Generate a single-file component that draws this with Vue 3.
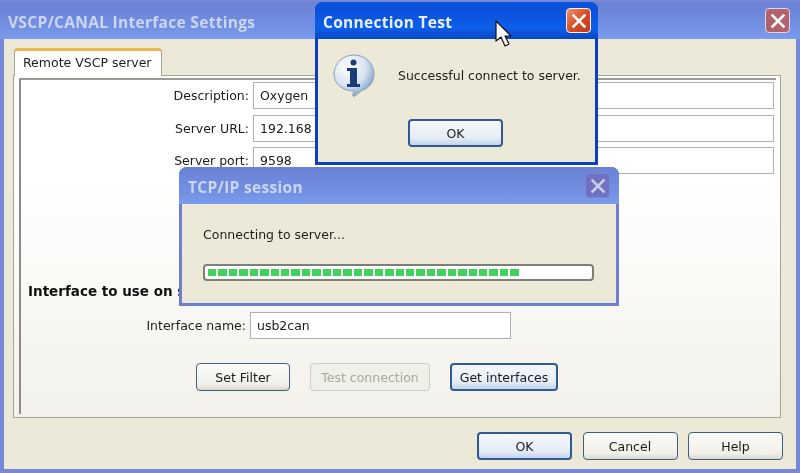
<script setup>
const fields = [
  { label: 'Description:', value: 'Oxygen' },
  { label: 'Server URL:', value: '192.168' },
  { label: 'Server port:', value: '9598' },
]
const segments = Array.from({ length: 30 })
</script>

<template>
  <div class="screen">
    <section class="window main">
      <header class="titlebar inactive">
        <span class="title">VSCP/CANAL Interface Settings</span>
        <span class="close faded-red">
          <svg viewBox="0 0 20 20" width="18" height="18"><path d="M4 4 16 16M16 4 4 16" stroke="#fff" stroke-width="3" stroke-linecap="square" /></svg>
        </span>
      </header>
      <div class="client">
        <div class="tabs"><span class="tab">Remote VSCP server</span></div>
        <div class="panel">
          <div class="inner">
            <div class="fields">
              <div v-for="f in fields" :key="f.label" class="field">
                <label>{{ f.label }}</label>
                <span class="input">{{ f.value }}</span>
              </div>
            </div>
            <h4 class="heading">Interface to use on server</h4>
            <div class="iface">
              <label>Interface name:</label>
              <span class="input short">usb2can</span>
            </div>
            <div class="actions">
              <button class="btn w94">Set Filter</button>
              <button class="btn w120 disabled">Test connection</button>
              <button class="btn w108 focus">Get interfaces</button>
            </div>
          </div>
        </div>
        <footer class="footer">
          <button class="btn w95 focus">OK</button>
          <button class="btn w95">Cancel</button>
          <button class="btn w95">Help</button>
        </footer>
      </div>
    </section>

    <section class="dialog test">
      <header class="titlebar active small">
        <span class="title">Connection Test</span>
        <span class="close red">
          <svg viewBox="0 0 20 20" width="18" height="18"><path d="M4 4 16 16M16 4 4 16" stroke="#fff" stroke-width="3" stroke-linecap="square" /></svg>
        </span>
      </header>
      <div class="body testbody">
        <div class="message">
          <svg class="info" viewBox="0 0 44 44" width="44" height="44">
            <defs>
              <radialGradient id="bubble" cx="35%" cy="30%" r="75%">
                <stop offset="0" stop-color="#ffffff" />
                <stop offset="0.6" stop-color="#d6e2f2" />
                <stop offset="1" stop-color="#7f9cc4" />
              </radialGradient>
            </defs>
            <path d="M22 2C33 2 42 10 42 21c0 9-6 15-13 17l-6 5c-1 1-3 0-2-2l1-3C11 38 2 31 2 21 2 10 11 2 22 2Z" fill="url(#bubble)" stroke="#8b9fbd" />
            <circle cx="21.500" cy="9.500" r="3" fill="#1b3c7c" />
            <path d="M15 15h10v16h3v3H15v-3h3V18h-3Z" fill="#1b3c7c" />
          </svg>
          <span class="msgtext">Successful connect to server.</span>
        </div>
        <button class="btn w95 focus">OK</button>
      </div>
    </section>

    <section class="dialog session">
      <header class="titlebar inactive small2">
        <span class="title">TCP/IP session</span>
        <span class="close faded-blue">
          <svg viewBox="0 0 20 20" width="18" height="18"><path d="M4 4 16 16M16 4 4 16" stroke="#c9cfe8" stroke-width="3" stroke-linecap="square" /></svg>
        </span>
      </header>
      <div class="body sessionbody">
        <p class="connecting">Connecting to server...</p>
        <div class="progress">
          <i v-for="(s, i) in segments" :key="i"></i>
        </div>
      </div>
    </section>

    <svg class="cursor" viewBox="0 0 17 27" width="17" height="27">
      <path d="M1 1v20l5-4 4 9 4-2-4-8h6Z" fill="#fff" stroke="#111" stroke-width="1.200" stroke-linejoin="round" />
    </svg>
  </div>
</template>

<style scoped>
.screen {
  position: relative;
  width: 800px;
  height: 473px;
  overflow: hidden;
  font-family: "DejaVu Sans", Verdana, sans-serif;
  font-size: 12.500px;
  color: #1c1c1c;
  background: #7587d6;
  filter: blur(0.45px);
}
.window.main {
  height: 100%;
  display: flex;
  flex-direction: column;
  box-sizing: border-box;
  padding-top: 2px;
}
.titlebar {
  display: flex;
  align-items: center;
  justify-content: space-between;
  flex: none;
  box-sizing: border-box;
  font-weight: 700;
}
.titlebar.inactive {
  height: 37px;
  padding: 0 10px 0 8px;
  background: linear-gradient(#6a81d4, #7391e4 70%, #7c9cec);
  border-radius: 6px 6px 0 0;
  color: #cbd6f0;
}
.title {
  font-family: "Open Sans", "Noto Sans", sans-serif;
  font-size: 15.500px;
  letter-spacing: 0.3px;
  padding-top: 2px;
}
.close {
  width: 25px;
  height: 25px;
  box-sizing: border-box;
  border: 1px solid #d9d9ee;
  border-radius: 4px;
  display: flex;
  align-items: center;
  justify-content: center;
}
.faded-red { background: #b3616c; }
.faded-blue { background: #6f72c2; border-color: #7f86cc; }
.red { background: linear-gradient(135deg, #ee9070, #d8481f 55%, #c23a18); border-color: #f3f1ee; }
.client {
  flex: 1;
  display: flex;
  flex-direction: column;
  margin: 0 4px 4px;
  padding: 9px 16px 0 9px;
  background: #ece9d8;
  min-height: 0;
}
.tabs { display: flex; padding-left: 1px; }
.tab {
  box-sizing: border-box;
  width: 148px;
  height: 28px;
  margin-bottom: -1px;
  position: relative;
  z-index: 1;
  padding-left: 8px;
  background: #fff;
  border: 1px solid #a6a89a;
  border-top: 3px solid #eeb54e;
  border-bottom: 0;
  border-radius: 4px 4px 0 0;
  line-height: 23px;
}
.panel {
  box-sizing: border-box;
  height: 343px;
  padding: 2px 4px 3px 5px;
  margin-right: -1px;
  border: 1px solid #a5a69b;
  background: linear-gradient(#fff, #fff 30%, #f2f1ea);
}
.inner {
  height: 100%;
  box-sizing: border-box;
  border-top: 2px solid #999a92;
  border-left: 2px solid #8c8c86;
  display: flex;
  flex-direction: column;
  padding-top: 1.500px;
}
.fields { display: flex; flex-direction: column; gap: 4.500px; }
.field { display: flex; align-items: center; gap: 4px; height: 28px; }
.field label { width: 228px; text-align: right; flex: none; }
.input {
  box-sizing: border-box;
  display: block;
  width: 521px;
  height: 27px;
  line-height: 25px;
  padding-left: 6px;
  background: #fff;
  border: 1px solid #a8b0b8;
}
.heading {
  margin: 108.500px 0 0 7px;
  height: 17px;
  line-height: 17px;
  font-size: 13.500px;
  font-weight: 700;
  color: #111;
}
.iface { display: flex; align-items: center; gap: 4px; margin-top: 11px; height: 28px; }
.iface label { width: 225px; text-align: right; flex: none; }
.input.short { width: 261px; }
.actions { display: flex; gap: 20px; padding-left: 175px; margin-top: 24px; }
.btn {
  box-sizing: border-box;
  height: 28px;
  padding: 0;
  font: inherit;
  color: #1c1c1c;
  border: 1.500px solid #3f5f7e;
  border-radius: 4px;
  background: linear-gradient(#fbfbf8, #f0efe8 80%, #d9d7cc);
}
.btn.focus {
  border: 2px solid #2f5a94;
  background: linear-gradient(#f4f7fb, #e6edf6 70%, #c4d4ec);
}
.btn.disabled {
  color: #a9a89d;
  border: 1px solid #cfcdc2;
  background: #f0efe8;
}
.w94 { width: 94px; }
.w95 { width: 95px; }
.w108 { width: 108px; }
.w120 { width: 120px; }
.footer {
  flex: 1;
  display: flex;
  justify-content: flex-end;
  align-items: flex-start;
  gap: 10.500px;
  padding-top: 14px;
  margin-right: -3px;
}
.dialog {
  position: absolute;
  box-sizing: border-box;
  display: flex;
  flex-direction: column;
}
.test {
  left: 315px;
  top: 2px;
  width: 283px;
  height: 163px;
  border: 3px solid #0a3fc0;
  border-top: 0;
  border-radius: 8px 8px 0 0;
  background: #0a3fc0;
}
.titlebar.active.small {
  height: 37px;
  margin: 0 -3px;
  padding: 0 7px 0 8px;
  border-radius: 8px 8px 0 0;
  background: linear-gradient(#0a55de, #0a4fd8 20%, #0d5fea 70%, #0846c4);
  color: #e8f0fa;
}
.body {
  flex: 1;
  background: #ece9d8;
  display: flex;
  flex-direction: column;
}
.testbody { align-items: flex-start; padding: 14px 0 0 14px; }
.message { display: flex; align-items: center; height: 44px; }
.info { flex: none; }
.msgtext { margin-left: 22px; white-space: nowrap; }
.testbody .btn { margin: 22px 0 0 76px; }
.session {
  left: 179px;
  top: 167px;
  width: 440px;
  height: 139px;
  border: 3px solid #6f7fd0;
  border-top: 0;
  border-radius: 8px 8px 0 0;
  background: #6f7fd0;
}
.titlebar.inactive.small2 {
  height: 37px;
  margin: 0 -3px;
  padding: 0 9px 0 9px;
  border-radius: 8px 8px 0 0;
}
.sessionbody { padding: 0 21px; }
.connecting { margin: 22px 0 0; line-height: 18px; }
.progress {
  box-sizing: border-box;
  width: 391px;
  height: 17px;
  margin-top: 20px;
  padding: 3px 3px;
  display: flex;
  gap: 2px;
  background: #fff;
  border: 2px solid #7f7f77;
  border-radius: 4px;
}
.progress i {
  display: block;
  width: 8.430px;
  height: 100%;
  background: #3fd35c;
}
.cursor {
  position: absolute;
  left: 495px;
  top: 20px;
}
</style>
